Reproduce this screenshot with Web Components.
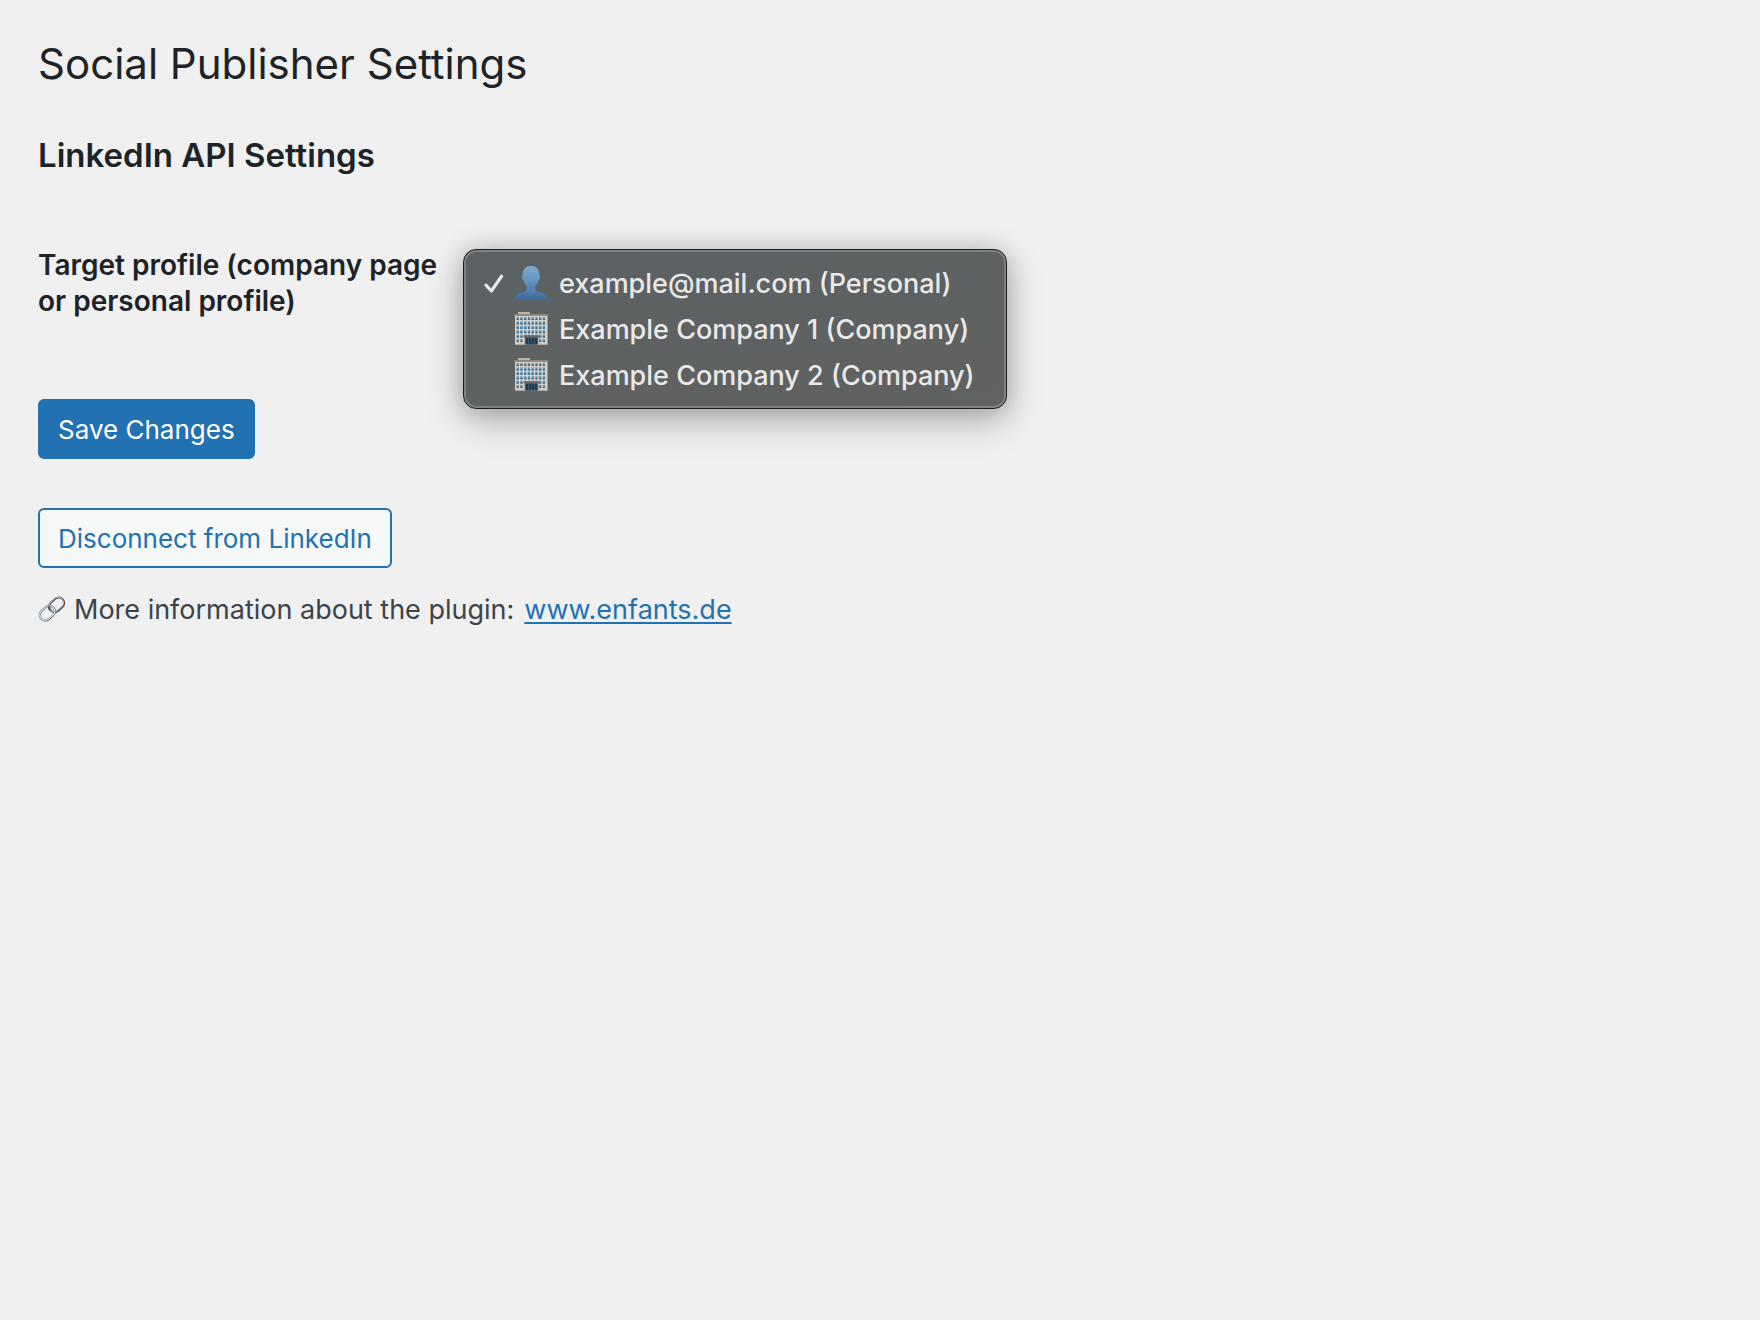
<!DOCTYPE html>
<html lang="en">
<head>
<meta charset="utf-8">
<title>Social Publisher Settings</title>
<style>
  html { background: #f0f0f0; }
  body { margin: 0; font-family: Inter, "Liberation Sans", sans-serif; font-size: 26px; color: #1d2327; }
</style>
</head>
<body>
<settings-page>
  <span slot="title">Social Publisher Settings</span>
  <span slot="section">LinkedIn API Settings</span>
  <setting-row label="Target profile (company page or personal profile)">
    <profile-menu label="Target profile (company page or personal profile)">
      <profile-option icon="person" checked>example@mail.com (Personal)</profile-option>
      <profile-option icon="office">Example Company 1 (Company)</profile-option>
      <profile-option icon="office">Example Company 2 (Company)</profile-option>
    </profile-menu>
  </setting-row>
  <wp-button slot="actions" variant="primary">Save Changes</wp-button>
  <wp-button slot="actions">Disconnect from LinkedIn</wp-button>
  <plugin-info slot="info" href="https://www.enfants.de" text="www.enfants.de">More information about the plugin:</plugin-info>
</settings-page>

<script>
const ICONS = {
  person: `<svg viewBox="0 0 34 34" width="34" height="34" aria-hidden="true">
    <defs><linearGradient id="p" x1="0" y1="0" x2="0" y2="1"><stop offset="0" stop-color="#82acd0"/><stop offset=".55" stop-color="#5d8cb9"/><stop offset="1" stop-color="#406b9b"/></linearGradient></defs>
    <path fill="url(#p)" d="M17 0C11.500 0 8.600 3.400 8.700 9c-.9.100-1.100 1-.9 2.300.2 1.700.8 2.800 1.700 3 .5 2.600 1.700 4.500 3.200 5.900v2.500c0 1.700-1.100 2.700-3.600 3.400C4.500 27.300.6 28.700.3 33.700h33.400c-.3-5-4.200-6.400-8.800-7.600-2.500-.7-3.600-1.700-3.600-3.400v-2.500c1.500-1.400 2.700-3.300 3.200-5.900.9-.2 1.500-1.300 1.700-3 .2-1.300 0-2.200-.9-2.300C25.400 3.400 22.500 0 17 0z"/>
  </svg>`,
  office: (() => {
    let w = '';
    for (let r = 0; r < 6; r++) for (let c = 0; c < 8; c++) {
      if (r === 5 && c > 1 && c < 6) continue;
      w += `<rect x="${2.6 + c * 3.75}" y="${5 + r * 4.4}" width="2.200" height="3" fill="#5f93b4"/><rect x="${2.6 + c * 3.75}" y="${6.7 + r * 4.4}" width="2.200" height="1.300" fill="#3b6785"/>`;
    }
    return `<svg viewBox="0 0 34 34" width="34" height="34" aria-hidden="true">
      <rect x="4" y="0" width="12" height="2.500" fill="#b8b3ad"/>
      <rect x="1" y="3" width="32.500" height="29.500" fill="#d5d1cb"/>
      <rect x="0" y="2" width="34.500" height="2" fill="#8f8781"/>
      ${w}
      <rect x="1" y="31.400" width="32.500" height="1.100" fill="#c4c0ba"/>
      <rect x="10.500" y="23.800" width="14" height="8.700" fill="#8e8780"/>
      <rect x="9.500" y="23.300" width="15.500" height="2" fill="#6c645e"/>
      <rect x="11.500" y="25.500" width="12" height="7" fill="#1d3b4c"/>
      <path d="M14.500 25.500v7M17.500 25.500v7M20.500 25.500v7" stroke="#4a6b7c" stroke-width=".7"/>
    </svg>`;
  })(),
  check: `<svg viewBox="0 0 20 20" width="20" height="20" aria-hidden="true"><path d="M2 11.200 7.400 17 17.600 2.200" fill="none" stroke="#e9e9e9" stroke-width="3.200" stroke-linecap="round" stroke-linejoin="round"/></svg>`,
  link: `<svg viewBox="0 0 28 28" width="28" height="28" aria-hidden="true" fill="none">
    <g transform="rotate(-42 14 14)">
      <rect x="12" y="8.500" width="16.500" height="11" rx="5.500" stroke="#54464a" stroke-width="2"/>
      <rect x="11.800" y="8" width="16.400" height="10.800" rx="5.400" stroke="#a9b9cc" stroke-width="1"/>
      <rect x="-.5" y="8.500" width="16.500" height="11" rx="5.500" stroke="#69727d" stroke-width="2.200"/>
      <rect x="-.4" y="8.400" width="16.300" height="10.700" rx="5.300" stroke="#d3dee8" stroke-width="1.200"/>
      <path d="M12 14a5.500 5.500 0 0 1 2-4.300" stroke="#5a5256" stroke-width="2"/>
    </g>
  </svg>`
};

class SettingsPage extends HTMLElement {
  constructor() {
    super();
    this.attachShadow({ mode: 'open' }).innerHTML = `
      <style>
        :host { display: block; padding: 34px 38px; }
        h1 { margin: 0; font-size: 42px; font-weight: 400; line-height: 60px; }
        h2 { margin: 43px 0 0; font-size: 33px; font-weight: 600; line-height: 36px; }
        form { display: flex; flex-direction: column; }
        .rows { padding-top: 74px; }
        .actions { display: flex; flex-direction: column; align-items: flex-start; gap: 49px; padding-top: 80px; }
        .info { padding-top: 24px; }
      </style>
      <main>
        <h1><slot name="title"></slot></h1>
        <h2><slot name="section"></slot></h2>
        <form>
          <div class="rows"><slot></slot></div>
          <div class="actions"><slot name="actions"></slot></div>
        </form>
        <div class="info"><slot name="info"></slot></div>
      </main>`;
  }
}

class SettingRow extends HTMLElement {
  constructor() {
    super();
    this.attachShadow({ mode: 'open' }).innerHTML = `
      <style>
        :host { display: grid; grid-template-columns: 400px 1fr; column-gap: 25px; }
        .label { font-size: 28px; font-weight: 600; line-height: 36px; }
        .field { padding-top: 2px; }
      </style>
      <div class="label"></div><div class="field"><slot></slot></div>`;
  }
  connectedCallback() { this.shadowRoot.querySelector('.label').textContent = this.getAttribute('label'); }
}

class ProfileMenu extends HTMLElement {
  constructor() {
    super();
    this.attachShadow({ mode: 'open' }).innerHTML = `
      <style>
        :host { display: block; position: relative; }
        .menu {
          position: absolute; top: 0; left: 0; z-index: 1; box-sizing: border-box;
          width: max-content; min-width: 544px; padding: 11px 19px 9px 17px;
          border: 1px solid #1c1c1d; border-radius: 13px;
          background: linear-gradient(170deg, #5b6164 0%, #5e6162 50%, #616261 100%);
          box-shadow: inset 0 0 0 2px #808182, 0 12px 36px rgba(0,0,0,.26), 0 0 24px rgba(0,0,0,.16);
        }
      </style>
      <div class="menu" role="radiogroup"><slot></slot></div>`;
  }
  connectedCallback() {
    this.shadowRoot.querySelector('.menu').setAttribute('aria-label', this.getAttribute('label'));
    this.addEventListener('change', e => {
      this.querySelectorAll('profile-option').forEach(o => { o.checked = o === e.target; });
    });
  }
}

class ProfileOption extends HTMLElement {
  constructor() {
    super();
    this.attachShadow({ mode: 'open' }).innerHTML = `
      <style>
        :host { display: block; }
        label { display: flex; align-items: center; height: 46px; box-sizing: border-box; color: #e9e9e9; font-size: 27px; font-weight: 500; line-height: 32px; white-space: nowrap; }
        input { appearance: none; width: 0; height: 0; margin: 0; }
        svg { display: block; overflow: visible; }
        .check { width: 20px; margin: 0 10px 0 3px; visibility: hidden; }
        input:checked + .check { visibility: visible; }
        .icon { margin-right: 11px; padding-bottom: 2px; }
      </style>
      <label><input type="radio"><span class="check">${ICONS.check}</span><span class="icon"></span><span class="text"><slot></slot></span></label>`;
    this.input = this.shadowRoot.querySelector('input');
    this.input.addEventListener('change', () => this.dispatchEvent(new Event('change', { bubbles: true })));
  }
  set checked(v) { this.input.checked = v; }
  connectedCallback() {
    this.shadowRoot.querySelector('.icon').innerHTML = ICONS[this.getAttribute('icon')];
    this.input.checked = this.hasAttribute('checked');
  }
}

class WpButton extends HTMLElement {
  constructor() {
    super();
    this.attachShadow({ mode: 'open' }).innerHTML = `
      <style>
        :host { display: block; }
        button {
          display: block; box-sizing: border-box; height: 60px; margin: 0; padding: 2px 18px 0;
          border: 2px solid #2271b1; border-radius: 6px; background: #f6f7f7; color: #2271b1;
          font: 400 26px/52px Inter, "Liberation Sans", sans-serif; white-space: nowrap; cursor: pointer;
        }
        :host([variant="primary"]) button { background: #2271b1; color: #fff; }
      </style>
      <button type="button"><slot></slot></button>`;
  }
}

class PluginInfo extends HTMLElement {
  constructor() {
    super();
    this.attachShadow({ mode: 'open' }).innerHTML = `
      <style>
        :host { display: block; }
        p { display: flex; align-items: center; margin: 0; color: #3c434a; font-size: 27px; line-height: 36px; }
        svg { display: block; margin-right: 8px; overflow: visible; }
        .icon { padding-bottom: 2px; }
        a { margin-left: 10px; color: #2271b1; text-decoration-thickness: 2px; text-underline-offset: 3px; text-decoration-skip-ink: none; }
      </style>
      <p><span class="icon">${ICONS.link}</span><span><slot></slot></span><a></a></p>`;
  }
  connectedCallback() {
    const a = this.shadowRoot.querySelector('a');
    a.href = this.getAttribute('href');
    a.textContent = this.getAttribute('text');
  }
}

customElements.define('settings-page', SettingsPage);
customElements.define('setting-row', SettingRow);
customElements.define('profile-menu', ProfileMenu);
customElements.define('profile-option', ProfileOption);
customElements.define('wp-button', WpButton);
customElements.define('plugin-info', PluginInfo);
</script>
</body>
</html>
